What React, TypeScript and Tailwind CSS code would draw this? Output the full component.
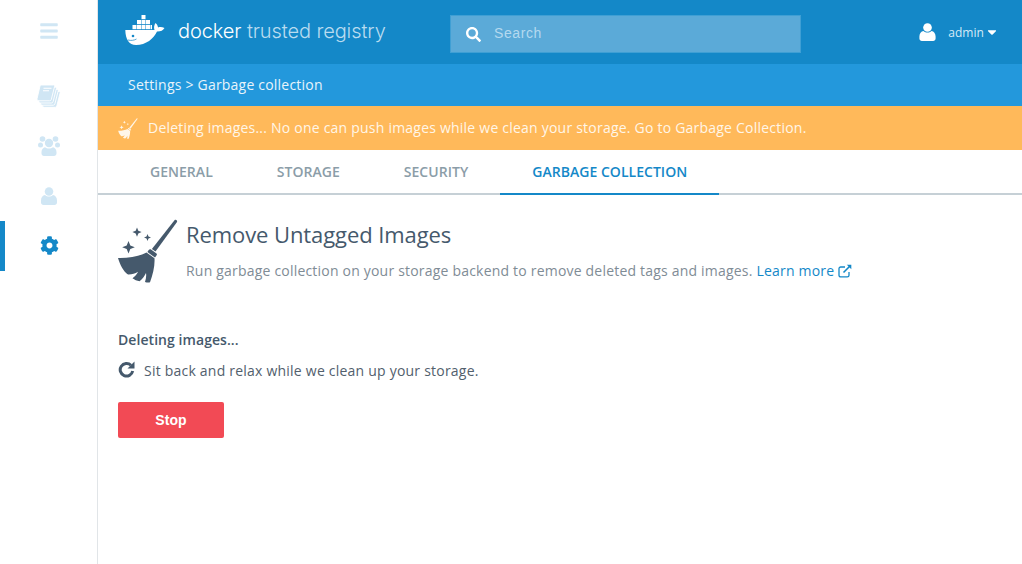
import React from 'react';
import { FaBars, FaCog, FaSearch, FaCaretDown } from 'react-icons/fa';

const UserShape: React.FC<{ className?: string }> = ({ className }) => (
  <svg className={className} viewBox="0 0 18 20" fill="currentColor">
    <circle cx="9" cy="5" r="4.8" />
    <path d="M0 15c0-3.5 2-6 4.5-6.2C6 10 7.400 10.600 9 10.600s3-.6 4.500-1.800C16 9 18 11.500 18 15v2.200c0 1.600-1.200 2.800-2.800 2.800H2.800C1.200 20 0 18.800 0 17.200z" />
  </svg>
);

const UsersShape: React.FC<{ className?: string }> = ({ className }) => (
  <svg className={className} viewBox="0 0 22 20" fill="currentColor">
    <circle cx="4.500" cy="3" r="2.800" />
    <circle cx="17.500" cy="3" r="2.800" />
    <circle cx="2.500" cy="9" r="2.500" />
    <circle cx="19.500" cy="9" r="2.500" />
    <circle cx="11" cy="7" r="4.200" />
    <path d="M3.500 16c0-3 2-4.500 3.500-4.800 1 .9 2.500 1.400 4 1.400s3-.5 4-1.400c1.500.3 3.500 1.800 3.500 4.800v1.500c0 1.400-1.100 2.500-2.500 2.500H6c-1.400 0-2.500-1.100-2.500-2.500z" />
  </svg>
);

const bookPath = 'M5 1h12.500c.8 0 1.300.6 1.100 1.400l-3.300 13.100c-.2.800-.8 1.300-1.600 1.300H3c-1.500 0-2.200-1-1.900-2.300L4 2c.1-.6.500-1 1-1z';

const BooksShape: React.FC<{ className?: string }> = ({ className }) => (
  <svg className={className} viewBox="0 0 25 25" fill="currentColor">
    <path d={bookPath} transform="translate(5.500 6.500)" stroke="#fff" strokeWidth=".9" />
    <path d={bookPath} transform="translate(3.600 4.400)" stroke="#fff" strokeWidth=".9" />
    <path d={bookPath} transform="translate(1.800 2.200)" stroke="#fff" strokeWidth=".9" />
    <path d={bookPath} stroke="#fff" strokeWidth=".9" />
    <path d="M7.500 4.300h8M7 6.800h6" stroke="#fff" strokeWidth="1.100" fill="none" />
  </svg>
);

const Whale: React.FC = () => (
  <svg className="mb-[4px] h-[30px] w-[40px]" viewBox="0 0 40 30" fill="#fff">
    <rect x="16.500" y="0" width="4" height="4.200" />
    <rect x="12" y="5" width="4" height="4.200" />
    <rect x="16.500" y="5" width="4" height="4.200" />
    <rect x="21" y="5" width="4" height="4.200" />
    <rect x="7.500" y="10" width="4" height="4.200" />
    <rect x="12" y="10" width="4" height="4.200" />
    <rect x="16.500" y="10" width="4" height="4.200" />
    <rect x="21" y="10" width="4" height="4.200" />
    <rect x="25.500" y="10" width="1.500" height="4.200" />
    <path d="M.3 15H29.500c-.8-2-.5-5 1-7 1.500 1.200 2.300 2.800 2.500 4.500 2-.7 4-.6 6.500.5-1.500 2.500-3.800 3.600-7.500 3.500C29 23.500 21 30 11 30 4 30 .5 24 .3 15z" />
    <circle cx="8" cy="21" r="1.300" fill="#1488c8" />
    <path d="M3 25c3 .8 6 .4 8.500-1" fill="none" stroke="#1488c8" strokeWidth=".7" />
  </svg>
);

const Broom: React.FC<{ className?: string }> = ({ className }) => (
  <svg className={className} viewBox="0 0 60 64" fill="currentColor">
    <path d="M56.500 1.200c1.200-1 3.200.3 2.500 1.800L37.500 32.500l-3.600-2.600z" />
    <path d="M33 30.500l5.200 3.700c.8.600.9 1.500.4 2.100L37 38.500l-7.600-5.400 1.300-2.100c.5-.6 1.500-.9 2.300-.5z" />
    <path d="M0 39c10 .3 21-1.500 28.500-5.500l8 5.800c.5 7-1.500 16-4.500 24-1.500.4-3.500.2-5-.4 1-3 1.500-6 1-9-1.500 3-3.500 6-6.500 8.300-2.500-.4-5-1.400-7-3 2.500-1.700 4.500-4 5.500-6.500-3 1.800-6.500 3-10 2.800C5.500 52.500 2 46 0 39z" />
    <path d="M10.500 22l1.800 4.500 4.500 1.800-4.500 1.800-1.800 4.500-1.800-4.500-4.500-1.800 4.500-1.800z" />
    <path d="M19 8.500l1.300 3.300 3.300 1.300-3.300 1.300-1.300 3.300-1.300-3.300-3.300-1.300 3.300-1.300z" />
    <path d="M29.500 15l1 2.500 2.500 1-2.500 1-1 2.500-1-2.500-2.500-1 2.500-1z" />
  </svg>
);

const tabs = ['GENERAL', 'STORAGE', 'SECURITY'];

const App: React.FC = () => {
  return (
    <div className="flex h-[564px] w-[1022px] overflow-hidden bg-white font-['Open_Sans',sans-serif]">
      {/* Sidebar */}
      <aside className="w-[98px] shrink-0 border-r border-[#e1e5e8] text-[#d0e6f4]">
        <div className="flex h-[71px] items-start justify-center pt-[21px]">
          <FaBars className="h-[20px] w-[18px]" />
        </div>
        <div className="flex h-[50px] items-center justify-center">
          <BooksShape className="h-[25px] w-[25px]" />
        </div>
        <div className="flex h-[50px] items-center justify-center">
          <UsersShape className="h-[20px] w-[22px]" />
        </div>
        <div className="flex h-[50px] items-center justify-center">
          <UserShape className="h-[18px] w-[16px]" />
        </div>
        <div className="flex h-[50px] items-center justify-center border-l-[5px] border-[#1488c8] pr-[3px] pb-[1px] text-[#1488c8]">
          <FaCog className="h-[19px] w-[19px]" />
        </div>
      </aside>

      <main className="min-w-0 flex-1">
        {/* Top bar */}
        <header className="flex h-[64px] items-center bg-[#1488c8] pl-[27px] text-white">
          <div className="flex w-[325px] shrink-0 items-center">
            <Whale />
            <span className="mb-[2px] ml-[13px] whitespace-nowrap font-['Inter',sans-serif] text-[20px] font-light tracking-[-0.1px]">
              docker <span className="text-[#b9dcf0]">trusted registry</span>
            </span>
          </div>
          <div className="mt-[4px] flex h-[38px] w-[351px] items-center border border-[#3f9fd4] bg-[#5baad8] pl-[15px]">
            <FaSearch className="h-[15px] w-[15px] text-white" />
            <span className="mb-[2px] ml-[13px] font-['Liberation_Sans',sans-serif] text-[14px] tracking-[0.6px] text-[#b4d9ef]">Search</span>
          </div>
          <div className="ml-auto flex items-center pr-[25px]">
            <UserShape className="mb-[1px] h-[18px] w-[17px]" />
            <span className="mt-[2px] ml-[12px] text-[12px] tracking-[0.05px] text-[#d6ebf7]">admin</span>
            <FaCaretDown className="ml-[3px] h-[14px] w-[10px]" />
          </div>
        </header>

        {/* Breadcrumb */}
        <div className="flex h-[42px] items-center bg-[#2398dc] pb-[2px] pl-[30px] text-[14px] tracking-[0.21px] text-[#e8f4fb]">
          Settings &gt; Garbage collection
        </div>

        {/* Banner */}
        <div className="flex h-[44px] items-center bg-[#ffb95a] pl-[20px] text-[14px] tracking-[0.22px] text-[#fff6e8]">
          <Broom className="h-[21px] w-[20px] text-[#fff6e8]" />
          <span className="mb-[2px] ml-[10px]">Deleting images... No one can push images while we clean your storage. Go to Garbage Collection.</span>
        </div>

        {/* Tabs */}
        <nav className="flex h-[45px] border-b-2 border-[#c6d0d6] pl-[20px] text-[14px] font-semibold tracking-[0.03px] text-[#8b9da8]">
          {tabs.map((tab) => (
            <div key={tab} className="flex h-[45px] items-center px-[32px] pb-[2px]">
              {tab}
            </div>
          ))}
          <div className="flex h-[45px] items-center border-b-2 border-[#1488c8] px-[32px] text-[#1488c8]">
            GARBAGE COLLECTION
          </div>
        </nav>

        {/* Content */}
        <section className="px-[20px] pt-[24px]">
          <div className="flex">
            <Broom className="h-[64px] w-[60px] text-[#45596c]" />
            <div className="ml-[8px]">
              <h1 className="text-[22px] leading-[30px] tracking-[-0.09px] text-[#45596c]">Remove Untagged Images</h1>
              <p className="mt-[12px] text-[14px] leading-[20px] tracking-[0.2px] text-[#7f8c96]">
                Run garbage collection on your storage backend to remove deleted tags and images.{' '}
                <span className="text-[#1488c8]">
                  Learn more{' '}
                  <svg className="mb-[3px] inline h-[14px] w-[14px]" viewBox="0 0 14 14" fill="none" stroke="currentColor" strokeWidth="1.300">
                    <path d="M11 8v3.200c0 1-.7 1.700-1.700 1.700H2.700c-1 0-1.700-.7-1.700-1.700V4.700C1 3.700 1.700 3 2.700 3H7" />
                    <path d="M5.500 8.500L12.500 1.500" strokeWidth="1.600" />
                    <path d="M8.800 .7h4.500v4.500z" fill="currentColor" stroke="none" />
                  </svg>
                </span>
              </p>
            </div>
          </div>
          <div className="mt-[47px] text-[14px] font-semibold leading-[20px] tracking-[0.06px] text-[#45596c]">Deleting images...</div>
          <div className="mt-[11px] flex items-center text-[14px] leading-[20px] tracking-[0.22px] text-[#52606d]">
            <svg className="mb-[3px] h-[17px] w-[17px] text-[#45596c]" viewBox="0 0 17 17" fill="none" stroke="currentColor">
              <path d="M13 4.300A6.300 6.300 0 1 0 14.700 10" strokeWidth="3" />
              <path d="M16.500 .5v7h-7z" fill="currentColor" stroke="none" />
            </svg>
            <span className="ml-[9px]">Sit back and relax while we clean up your storage.</span>
          </div>
          <button className="mt-[21px] flex h-[36px] w-[106px] items-center justify-center rounded-[2px] bg-[#f24a55] font-['Liberation_Sans',sans-serif] text-[14px] font-bold tracking-[0.1px] text-white">
            Stop
          </button>
        </section>
      </main>
    </div>
  );
};

export default App;
